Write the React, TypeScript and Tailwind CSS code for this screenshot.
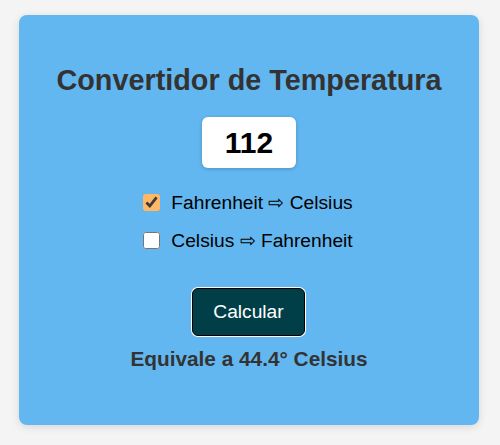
import React, { useState } from 'react';

const App: React.FC = () => {
  const [value, setValue] = useState('112');
  const [mode, setMode] = useState<'f2c' | 'c2f'>('f2c');
  const [result, setResult] = useState('Equivale a 44.4° Celsius');

  const calcular = () => {
    const n = parseFloat(value);
    if (isNaN(n)) return;
    if (mode === 'f2c') setResult(`Equivale a ${((n - 32) * 5 / 9).toFixed(1)}° Celsius`);
    else setResult(`Equivale a ${(n * 9 / 5 + 32).toFixed(1)}° Fahrenheit`);
  };

  return (
    <div className="min-h-screen w-full bg-[#f4f4f4] pt-[15px] font-['Liberation_Sans',Arial,sans-serif]">
      <div className="ml-[19px] w-[460px] h-[410px] bg-[#63b7f0] rounded-lg shadow-[0_2px_8px_rgba(0,0,0,0.12)] flex flex-col items-center pt-[48px]">
        <h1 className="text-[28.8px] leading-[34px] font-bold text-[#333333]">Convertidor de Temperatura</h1>
        <input
          className="mt-[20px] w-[94px] h-[51px] bg-white rounded-md text-center text-[30px] font-bold text-black outline-none shadow-[0_1px_4px_rgba(0,0,0,0.2)]"
          value={value}
          onChange={e => setValue(e.target.value)}
        />
        <div className="mt-[24px] flex flex-col items-start gap-[17px] -ml-[2px]">
          <label className="flex items-center gap-[11px] text-[19.2px] leading-[21px] text-black">
            <input type="checkbox" className="w-[17px] h-[17px] m-0 accent-[#ffb866]" checked={mode === 'f2c'} onChange={() => setMode('f2c')} />
            Fahrenheit ⇨ Celsius
          </label>
          <label className="flex items-center gap-[11px] text-[19.2px] leading-[21px] text-black">
            <input type="checkbox" className="w-[17px] h-[17px] m-0 accent-[#ffb866]" checked={mode === 'c2f'} onChange={() => setMode('c2f')} />
            Celsius ⇨ Fahrenheit
          </label>
        </div>
        <button
          onClick={calcular}
          className="mt-[37px] -ml-[1px] w-[113px] h-[48px] bg-[#003f47] text-white text-[19.2px] rounded-md border border-black shadow-[0_0_0_1px_#fff]"
        >
          Calcular
        </button>
        <p className="mt-[11px] text-[20.8px] leading-[24px] font-bold text-[#333333]">{result}</p>
      </div>
    </div>
  );
};

export default App;
